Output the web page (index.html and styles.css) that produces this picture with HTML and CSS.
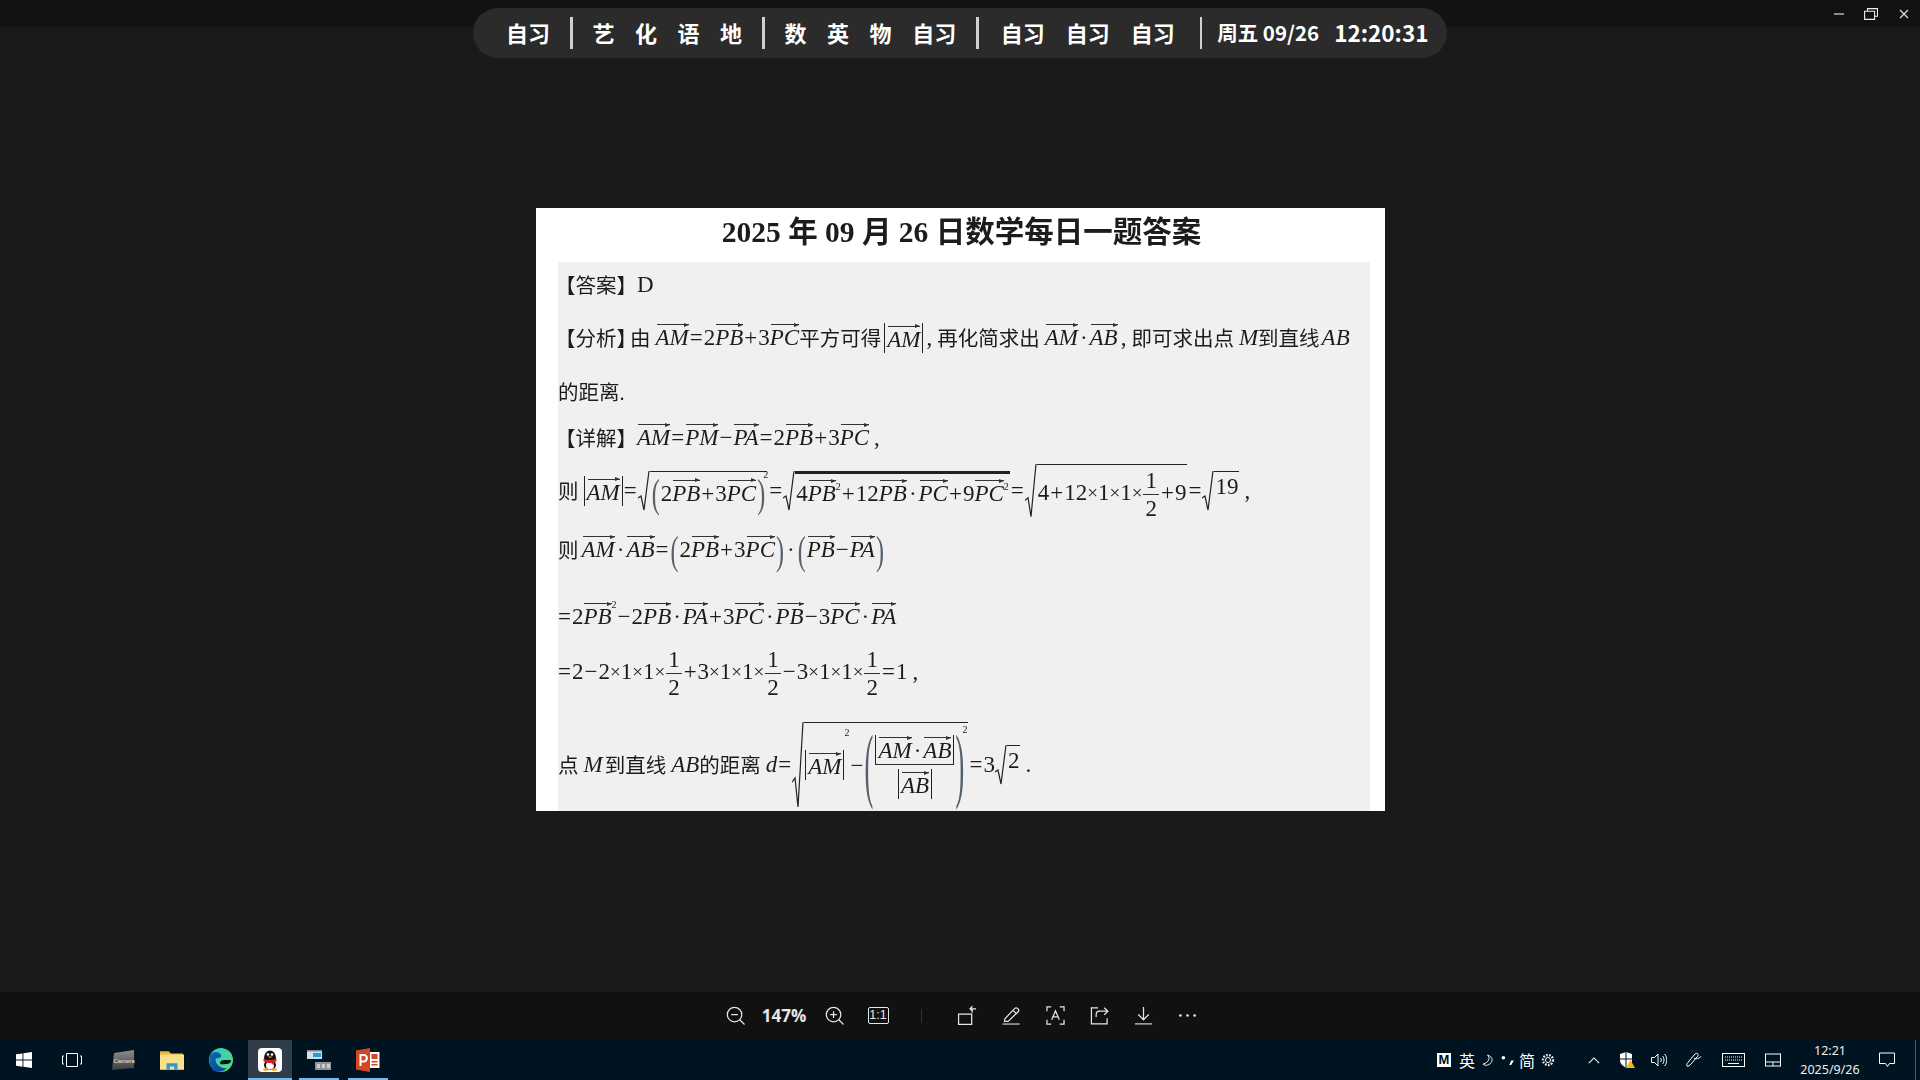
FILE: index.html
```html
<!DOCTYPE html>
<html lang="zh-CN">
<head>
<meta charset="utf-8">
<title>图片查看</title>
<link rel="stylesheet" href="styles.css">
</head>
<body>
<header class="titlebar">
  <svg class="win-min" viewBox="0 0 10 2"><rect width="10" height="2" fill="#8a8a8a"/></svg>
  <svg class="win-max" viewBox="0 0 14 12"><path d="M3.500 3V.6h10v7.600H11M.6 3.200h10v8.200H.6z" fill="none" stroke="#eee" stroke-width="1.100"/></svg>
  <svg class="win-close" viewBox="0 0 10 10"><path d="M1 1l8 8M9 1l-8 8" stroke="#ddd" stroke-width="1.200"/></svg>
</header>

<div class="schedule">
  <span>自习</span><i class="sch-sep"></i>
  <span class="sch-group"><span>艺</span><span>化</span><span>语</span><span>地</span></span><i class="sch-sep"></i>
  <span class="sch-group"><span>数</span><span>英</span><span>物</span><span>自习</span></span><i class="sch-sep"></i>
  <span class="sch-group wide"><span>自习</span><span>自习</span><span>自习</span></span><i class="sch-sep"></i>
  <span class="sch-time"><span class="sch-date">周五 09/26</span><span class="sch-clock">12:20:31</span></span>
</div>

<main class="viewer">
  <article class="paper">
    <h1 class="paper-title">2025 年 09 月 26 日数学每日一题答案</h1>
    <section class="sheet">
      <div class="ln l1"><span class="zh hang">【答案】</span><span>D</span></div>
      <div class="ln l2"><span class="zh hang">【分析】</span><span class="zh you">由</span><i class="v ml4">AM</i><span class="op">=</span><span>2</span><i class="v">PB</i><span class="op">+</span><span>3</span><i class="v">PC</i><span class="zh">平方可得</span><span class="abs ml3"><i class="v">AM</i></span><span class="ml3">,</span><span class="zh ml4">再化简求出</span><i class="v ml4">AM</i><span class="dot">·</span><i class="v">AB</i><span class="ml3">,</span><span class="zh ml4">即可求出点</span><i class="ml4">M</i><span class="zh">到直线</span><i class="ml2">AB</i></div>
      <div class="ln l3"><span class="zh">的距离.</span></div>
      <div class="ln l4"><span class="zh hang">【详解】</span><i class="v">AM</i><span class="op">=</span><i class="v">PM</i><span class="op">−</span><i class="v">PA</i><span class="op">=</span><span>2</span><i class="v">PB</i><span class="op">+</span><span>3</span><i class="v">PC</i><span class="ml4">,</span></div>
      <div class="ln l5"><span class="zh">则</span><span class="abs ml4"><i class="v">AM</i></span><span class="op">=</span>
        <span class="rt r-a"><svg class="rad" viewBox="0 0 12 40" preserveAspectRatio="none"><path d="M0 27L3 25L6 39L11 0"/></svg><span class="rb"><span class="par">(</span><span>2</span><i class="v">PB</i><span class="op">+</span><span>3</span><i class="v">PC</i><span class="par">)</span></span></span><sup class="s2 out">2</sup>
        <span class="op ml4">=</span>
        <span class="rt r-b"><svg class="rad" viewBox="0 0 12 40" preserveAspectRatio="none"><path d="M0 27L3 25L6 39L11 0"/></svg><span class="rb heavy"><span>4</span><i class="v">PB</i><sup class="s2">2</sup><span class="op ml3">+</span><span>12</span><i class="v">PB</i><span class="dot">·</span><i class="v">PC</i><span class="op">+</span><span>9</span><i class="v">PC</i><sup class="s2">2</sup></span></span>
        <span class="op ml4">=</span>
        <span class="rt r-c"><svg class="rad" viewBox="0 0 12 40" preserveAspectRatio="none"><path d="M0 27L3 25L6 39L11 0"/></svg><span class="rb"><span>4</span><span class="op">+</span><span>12</span><span class="x">×</span><span>1</span><span class="x">×</span><span>1</span><span class="x">×</span><span class="frac"><span>1</span><span>2</span></span><span class="op">+</span><span>9</span></span></span>
        <span class="op">=</span>
        <span class="rt r-d"><svg class="rad" viewBox="0 0 12 40" preserveAspectRatio="none"><path d="M0 27L3 25L6 39L11 0"/></svg><span class="rb"><span>19</span></span></span><span class="ml4">,</span></div>
      <div class="ln l6"><span class="zh">则</span><i class="v ml3">AM</i><span class="dot">·</span><i class="v">AB</i><span class="op">=</span><span class="par">(</span><span>2</span><i class="v">PB</i><span class="op">+</span><span>3</span><i class="v">PC</i><span class="par">)</span><span class="dot">·</span><span class="par">(</span><i class="v">PB</i><span class="op">−</span><i class="v">PA</i><span class="par">)</span></div>
      <div class="ln l7"><span class="op first">=</span><span>2</span><i class="v">PB</i><sup class="s2">2</sup><span class="op ml3">−</span><span>2</span><i class="v">PB</i><span class="dot">·</span><i class="v">PA</i><span class="op">+</span><span>3</span><i class="v">PC</i><span class="dot">·</span><i class="v">PB</i><span class="op">−</span><span>3</span><i class="v">PC</i><span class="dot">·</span><i class="v">PA</i></div>
      <div class="ln l8"><span class="op first">=</span><span>2</span><span class="op">−</span><span>2</span><span class="x">×</span><span>1</span><span class="x">×</span><span>1</span><span class="x">×</span><span class="frac"><span>1</span><span>2</span></span><span class="op">+</span><span>3</span><span class="x">×</span><span>1</span><span class="x">×</span><span>1</span><span class="x">×</span><span class="frac"><span>1</span><span>2</span></span><span class="op">−</span><span>3</span><span class="x">×</span><span>1</span><span class="x">×</span><span>1</span><span class="x">×</span><span class="frac"><span>1</span><span>2</span></span><span class="op">=</span><span>1</span><span class="ml4">,</span></div>
      <div class="ln l9"><span class="zh">点</span><i class="ml4">M</i><span class="zh ml2">到直线</span><i class="ml4">AB</i><span class="zh">的距离</span><i class="ml4">d</i><span class="op">=</span>
        <span class="rt r-e"><svg class="rad" viewBox="0 0 12 40" preserveAspectRatio="none"><path d="M0 28L3 26L6 39.500L11 0"/></svg><span class="rb"><span class="abs"><i class="v">AM</i></span><sup class="s2">2</sup><span class="op">−</span><span class="par huge">(</span><span class="frac big"><span class="abs"><i class="v">AM</i><span class="dot">·</span><i class="v">AB</i></span><span class="abs"><i class="v">AB</i></span></span><span class="par huge">)</span><sup class="s2 hi">2</sup></span></span>
        <span class="op ml4">=</span><span>3</span><span class="rt r-d"><svg class="rad" viewBox="0 0 12 40" preserveAspectRatio="none"><path d="M0 27L3 25L6 39L11 0"/></svg><span class="rb"><span>2</span></span></span><span class="ml4">.</span></div>
    </section>
  </article>
</main>

<nav class="toolbar">
  <span class="tool"><svg viewBox="0 0 20 20"><circle cx="9" cy="9" r="7.600"/><path d="M5.500 9h7M14.500 14.500l5 5"/></svg></span>
  <span class="tool-pct">147%</span>
  <span class="tool tool-in"><svg viewBox="0 0 20 20"><circle cx="9" cy="9" r="7.600"/><path d="M5.500 9h7M9 5.500v7M14.500 14.500l5 5"/></svg></span>
  <span class="tool tool-one"><span class="one-box">1:1</span></span>
  <i class="tool-div"></i>
  <span class="tool wide"><svg viewBox="0 0 20 20"><path d="M.6 8.500h13.800v10.800H.6zM15 7V5.500c0-1.500-.8-2.500-2.300-2.500H19M15 3h-2.300M15.300.3L12.700 3l2.600 2.500"/></svg></span>
  <span class="tool wide"><svg viewBox="0 0 20 20"><path d="M3 13.500L13.500 2.500c.8-.8 2-.8 2.800 0l.7.7c.8.8.8 2 0 2.800L6.500 16.200H2.600zM11.500 4.500l4 4"/><path class="bar" d="M.5 19h18"/></svg></span>
  <span class="tool wide"><svg viewBox="0 0 20 20"><path d="M5.500 1H1v4.500M14.500 1H19v4.500M5.500 19H1v-4.500M14.500 19H19v-4.500M6 14.500L10 5l4 9.500M7.300 11.500h5.400"/></svg></span>
  <span class="tool wide"><svg viewBox="0 0 20 20"><path d="M8.500 2H1.500v16.800H18v-6M6.500 11.500V9c0-2 1.500-3.500 3.500-3.500h8.500M15 1.800l3.800 3.700L15 9.200"/></svg></span>
  <span class="tool wide"><svg viewBox="0 0 20 20"><path d="M10 1v13.500M4.500 9l5.500 5.500L15.500 9"/><path class="bar" d="M1 18.800h18"/></svg></span>
  <span class="tool wide"><svg viewBox="0 0 20 20"><circle class="fill" cx="2.500" cy="10" r="1.400"/><circle class="fill" cx="10" cy="10" r="1.400"/><circle class="fill" cx="17.500" cy="10" r="1.400"/></svg></span>
</nav>

<footer class="taskbar">
  <div class="task-left">
    <span class="cell"><svg class="ic16" viewBox="0 0 16 16"><path fill="#fff" d="M0 2.300l6.500-.9v6.200H0zM7.400 1.300L16 0v7.600H7.400zM0 8.500h6.500v6.200L0 13.800zM7.400 8.500H16V16l-8.600-1.300z"/></svg></span>
    <span class="cell"><svg class="ic20" viewBox="0 0 20 14"><path fill="none" stroke="#fff" stroke-width="1" d="M4.500.5h11v13h-11zM2 3H.5v8H2M18 3h1.500v8H18"/></svg></span>
    <span class="cell narrow"><svg class="ic24" viewBox="0 0 24 20"><defs><linearGradient id="cam" x1="0" y1="0" x2="0" y2="1"><stop offset="0" stop-color="#8e8e8e"/><stop offset="1" stop-color="#3e3e3e"/></linearGradient></defs><path fill="url(#cam)" d="M3 3L23 0v18L1 20z"/><text class="cam-text" x="2.500" y="13">Camera</text></svg></span>
    <span class="cell narrow"><svg class="ic24" viewBox="0 0 22 18"><path fill="#e8b93f" d="M0 1h8l2 2h11v2H0z"/><path fill="#fbe08a" d="M0 4h22v14H0z"/><path fill="#2b9bd8" d="M6 18v-6h10v6h-3v-3H9v3z"/></svg></span>
    <span class="cell narrow"><svg class="ic24" viewBox="0 0 24 24"><defs><linearGradient id="edgeA" x1="0" y1="0" x2="1" y2="1"><stop offset="0" stop-color="#2ec4d6"/><stop offset="1" stop-color="#5ce06a"/></linearGradient><linearGradient id="edgeB" x1="0" y1="0" x2="1" y2="1"><stop offset="0" stop-color="#0b6ab8"/><stop offset="1" stop-color="#0a3f8a"/></linearGradient></defs><circle cx="12" cy="12" r="12" fill="url(#edgeA)"/><path fill="url(#edgeB)" d="M1 7c3-4 9-4 11 0 1 2-1 3-3 3-3 0-3 3-1 6 2 3 6 5 10 4-3 3-8 5-13 3C2 21-1 13 1 7z"/><path fill="#001320" d="M11 15c0-2 2-3 5-3h6c0 3-2 4-5 4-3 0-6 1-6-1z"/></svg></span>
    <span class="cell narrow active"><svg class="ic24" viewBox="0 0 24 24"><rect width="24" height="24" rx="4" fill="#fff"/><ellipse cx="12" cy="10" rx="6" ry="7.500" fill="#111"/><ellipse cx="12" cy="17" rx="6" ry="5" fill="#111"/><ellipse cx="12" cy="17.500" rx="4" ry="4" fill="#fff"/><ellipse cx="8" cy="21.500" rx="3" ry="1.200" fill="#e8a020"/><ellipse cx="16" cy="21.500" rx="3" ry="1.200" fill="#e8a020"/><path fill="#e02020" d="M5.500 10.500c4 2 9 2 13 0V13c-1 .7-2 1.200-3 1.400l.5 3.100-3-2.500c-3 .3-6-.6-7.500-2z"/><circle cx="10" cy="6.500" r="1.300" fill="#fff"/><circle cx="14" cy="6.500" r="1.300" fill="#fff"/><path fill="#f0b020" d="M9.500 8.500h5L12 10z"/></svg></span>
    <span class="cell narrow run"><svg class="ic24" viewBox="0 0 24 20"><rect x="0" y="1" width="15" height="8" fill="#d5dfe6"/><rect x="6" y="3" width="8" height="4" fill="#1c9ee8"/><rect x="0" y="0" width="15" height="1.500" fill="#7a8a94"/><rect x="8" y="12" width="16" height="8" fill="#8e9498"/><rect x="10" y="14" width="3" height="4" fill="#c8ced2"/><rect x="15" y="14" width="3" height="4" fill="#c8ced2"/><rect x="20" y="14" width="3" height="4" fill="#c8ced2"/></svg></span>
    <span class="cell narrow run"><svg class="ic24" viewBox="0 0 24 24"><path fill="#d24726" d="M0 2.500L14 0v24L0 21.500z"/><path fill="#fff" d="M14 4h9.500v16H14z"/><path fill="#d24726" d="M15.500 6h6v5h-6zM15.500 13h6v1.500h-6zM15.500 16h6v1.500h-6z"/><path fill="none" stroke="#fff" stroke-width="2" d="M4.500 18V7h3.200a3 3 0 010 6.400H4.500"/></svg></span>
  </div>
  <div class="tray">
    <span class="ime"><b class="ime-m">M</b><span class="ime-t ime-en">英</span><svg class="ime-moon" viewBox="0 0 12 14"><path d="M6 1c3 3 2 8-5 10 4 3 10 0 10-5 0-2-2-4-5-5z" fill="none" stroke="#fff" stroke-width="1"/></svg><svg class="ime-dots" viewBox="0 0 14 12"><circle cx="2.500" cy="3" r="2" fill="#fff"/><path d="M9 11l2-5h3l-3 5z" fill="#fff"/></svg><span class="ime-t ime-zh">简</span><svg class="ime-gear" viewBox="0 0 14 14"><circle cx="7" cy="7" r="2.500" fill="none" stroke="#fff"/><circle cx="7" cy="7" r="5" fill="none" stroke="#fff" stroke-width="2.400" stroke-dasharray="1.700 1.300" opacity=".9"/></svg></span>
    <span class="tray-cell c-chev"><svg viewBox="0 0 14 8" class="t-chev"><path d="M1 7l6-6 6 6" fill="none" stroke="#fff" stroke-width="1.200"/></svg></span>
    <span class="tray-cell c-shield"><svg viewBox="0 0 16 16" class="t16"><path d="M1 2l6-2 6 2v6c0 4-3 6-6 7.500C4 14 1 12 1 8z" fill="#fff"/><path d="M7 0v15M1 7h12" stroke="#001320"/><path d="M11.500 8l4.500 8H7z" fill="#f5b50f"/></svg></span>
    <span class="tray-cell c-vol"><svg viewBox="0 0 16 14" class="t16"><path d="M.5 4.500h3l3.500-3.500v12L3.500 9.500h-3zM9.500 5c1 1 1 3 0 4M11.500 3c2 2 2 6 0 8M13.500 1c3 3 3 9 0 12" fill="none" stroke="#fff"/></svg></span>
    <span class="tray-cell c-pen"><svg viewBox="0 0 16 16" class="t16"><path d="M1 14c-1-2 1-3 2-5l6-7c1-1 2.500-1 3 0s0 2-1 3l-6 7c-1 1-3 3-4 2zM8 6c1 1 3 1 5 0s2-2 2-1" fill="none" stroke="#fff"/></svg></span>
    <span class="tray-cell c-kbd"><svg viewBox="0 0 23 14" class="t-kbd"><rect x=".5" y=".5" width="22" height="13" fill="none" stroke="#fff"/><path d="M3 4h17M3 7h17" stroke="#fff" stroke-dasharray="1 1"/><path d="M6 10.500h11" stroke="#fff"/></svg></span>
    <span class="tray-cell c-pad"><svg viewBox="0 0 16 13" class="t16"><rect x=".5" y=".5" width="15" height="12" fill="none" stroke="#fff"/><path d="M.5 8.500h15M8 8.500v4" stroke="#fff"/></svg></span>
    <span class="clock"><span>12:21</span><span>2025/9/26</span></span>
    <span class="tray-cell c-note"><svg viewBox="0 0 16 15" class="t16"><path d="M.5.5h15v10.500h-5l-2 3-2-3h-6z" fill="none" stroke="#fff"/></svg></span>
    <i class="desk"></i>
  </div>
</footer>
</body>
</html>
```

FILE: styles.css
```css
* { box-sizing: border-box; }
html, body { margin: 0; height: 100%; }
body {
  width: 1920px; height: 1080px; overflow: hidden;
  display: flex; flex-direction: column;
  background: #1a1a1a; color: #fff;
  font-family: "Noto Sans CJK SC", "Noto Sans", sans-serif;
  position: relative;
}

/* title bar */
.titlebar { height: 27px; flex: none; background: #121212; display: flex; align-items: flex-start; justify-content: flex-end; }
.titlebar svg { display: block; flex: none; }
.win-min { width: 10px; height: 2px; margin-top: 13px; }
.win-max { width: 14px; height: 12px; margin: 8px 0 0 20px; }
.win-close { width: 10px; height: 10px; margin: 9px 11px 0 21px; }

/* schedule pill */
.schedule {
  position: absolute; left: 473px; top: 8px; width: 974px; height: 50px;
  background: #2b2b2b; border-radius: 25px;
  display: flex; align-items: center; gap: 20px; padding: 0 0 2px 33px;
  font-size: 22px; font-weight: 700; line-height: 1; color: #fff;
}
.sch-sep { width: 2.500px; height: 32px; background: #d0d0d0; flex: none; margin-top: 2px; }
.sch-group { display: flex; gap: 20.500px; }
.sch-group.wide { gap: 21px; margin: 0 5px 0 2px; }
.sch-time { display: flex; align-items: center; gap: 15px; margin-left: -5px; }
.sch-date { font-size: 20.500px; }
.sch-clock { font-size: 22.500px; }

/* picture */
.viewer { flex: 1; display: flex; align-items: center; justify-content: center; }
.paper { width: 849px; height: 603px; background: #fff; color: #1c1c1c; display: flex; flex-direction: column; font-family: "Liberation Serif", "Noto Sans CJK SC", serif; filter: blur(.35px); margin-left: 1px; }
.paper-title { margin: 0; height: 54px; flex: none; font-size: 29.500px; line-height: 48px; font-weight: 700; text-align: center; padding-left: 2px; }
.sheet { margin-left: 22px; width: 812px; flex: 1; background: #f0f0f0; font-size: 23px; }

.ln { display: flex; align-items: center; white-space: pre; line-height: 1; }
.ln > *, .rb > * { flex: none; }
.zh { font-size: 20.500px; position: relative; top: 2px; }
.you { margin-left: -7px; }
.l1 { height: 46px; }
.l2 { height: 60px; }
.l3 { height: 48px; }
.l4 { height: 44px; }
.l5 { height: 62px; }
.l6 { height: 56px; }
.l7 { height: 58px; margin-top: 10px; }
.l8 { height: 52px; }
.l9 { height: 92px; margin-top: 21px; }

.hang { margin-left: -3px; }
.ml2 { margin-left: 2px; }
.ml3 { margin-left: 3px; }
.ml4 { margin-left: 5px; }
.op { margin: 0 1px; font-family: "Liberation Serif", serif; }
.op.first { margin-left: 0; }
.x { font-size: 19px; margin: 0; }
.dot { margin: 0 2px; }
i { font-family: "Liberation Serif", serif; font-style: italic; }

.v { position: relative; display: inline-block; }
.v::before { content: ""; position: absolute; left: 1px; right: 0; top: -2px; height: 1.200px; background: #333; }
.v::after { content: ""; position: absolute; right: 0; top: -3.300px; border-left: 5px solid #333; border-top: 2px solid transparent; border-bottom: 2px solid transparent; }

.abs { display: inline-flex; align-items: center; border-left: 1.400px solid #222; border-right: 1.400px solid #222; padding: 5px 2px 2px; }
.s2 { font-size: 10px; align-self: flex-start; line-height: 1; margin-top: 12px; }
.s2.out { margin-top: 10px; margin-left: -4px; }
.rb .s2 { margin-top: 5px; }
.rb .s2.hi { margin-top: 2px; margin-left: -3px; }
.par { display: inline-block; font-size: 24px; font-weight: 400; color: #55606a; transform: scale(1, 1.700); margin: 0 1px; }
.par.huge { transform: scale(1.100, 3.400); }

.frac { display: inline-flex; flex-direction: column; align-items: center; margin: 0 1px; position: relative; top: 2px; }
.frac > span:first-child { border-bottom: 1.300px solid #333; padding: 0 2px 2px; }
.frac > span:last-child { padding-top: 2px; }
.frac.big > span:first-child { padding: 4px 2px 2px; margin-bottom: 4px; }
.frac.big > .abs:last-child { padding: 5px 2px 2px; }

.rt { display: inline-flex; align-items: stretch; }
.rad { width: 12px; flex: none; display: block; }
.rad path { fill: none; stroke: #222; stroke-width: 1.200; vector-effect: non-scaling-stroke; }
.rb { display: inline-flex; align-items: center; border-top: 1.400px solid #222; padding: 0 1px; }
.rb.heavy { border-top-width: 3px; padding-top: 3px; }
.r-a .rb { height: 40px; padding-top: 4px; }
.r-c .rb { padding-top: 2px; }
.r-d .rb { height: 27px; padding-top: 3px; }
.r-e .rb { height: 86px; }

/* viewer toolbar */
.toolbar { height: 49px; flex: none; background: #111; display: flex; align-items: center; padding: 0 0 1px 717px; border-top: 1px solid #1c1c1c; }
.tool { width: 36px; height: 20px; display: flex; align-items: center; justify-content: center; flex: none; }
.tool svg { width: 19px; height: 19px; fill: none; stroke: #e6e6e6; stroke-width: 1.300; overflow: visible; }
.tool svg .fill { fill: #e6e6e6; stroke: none; }
.tool svg .bar { stroke: #9a9a9a; stroke-width: 1.800; }
.tool-pct { width: 62px; text-align: center; font-size: 17px; font-weight: 700; color: #e6e6e6; font-family: "Open Sans", sans-serif; flex: none; }
.tool-in { width: 38px; }
.tool-one { margin-left: 7px; }
.one-box { width: 21px; height: 17px; border: 1.300px solid #e6e6e6; border-radius: 2px; font-size: 12.500px; line-height: 14px; text-align: center; font-family: "Liberation Sans", sans-serif; color: #e6e6e6; }
.tool-div { width: 1px; height: 14px; background: #333; margin: 0 23px 0 25px; flex: none; }
.tool.wide { width: 44px; }

/* taskbar */
.taskbar { height: 40px; flex: none; background: #001320; display: flex; justify-content: space-between; position: relative; }
.task-left { display: flex; }
.cell { width: 48px; height: 40px; display: flex; align-items: center; justify-content: center; flex: none; position: relative; }
.cell.narrow { width: 49px; }
.cell:nth-child(3) { margin-left: 2.500px; }
.cell svg { display: block; }
.ic16 { width: 16px; height: 16px; }
.ic20 { width: 20px; height: 14px; }
.ic24 { width: 24px; height: 24px; }
.active::before { content: ""; position: absolute; left: 0; top: 0; width: 44px; height: 40px; margin-left: 2px; background: #2f3e48; }
.active svg { position: relative; }
.active::after, .run::after { content: ""; position: absolute; left: 2px; bottom: 0; width: 44px; height: 2px; background: #76b9ed; }
.run::after { left: 4px; width: 40px; }
.cam-text { font: 6px "Liberation Sans", sans-serif; fill: #e4e4e4; }

.tray { display: flex; align-items: center; height: 40px; }
.ime { display: flex; align-items: center; margin-right: 23px; height: 40px; }
.ime-m { width: 14px; height: 14px; background: #fff; color: #001320; font: 700 13px/14px "Liberation Sans", sans-serif; text-align: center; }
.ime-t { font-size: 16px; line-height: 1; color: #fff; }
.ime-en { margin-left: 8px; }
.ime-zh { margin-left: 5px; }
.ime-moon { width: 11px; height: 13px; margin-left: 7px; }
.ime-dots { width: 13px; height: 11px; margin-left: 8px; }
.ime-gear { width: 14px; height: 14px; margin-left: 6px; }
.tray-cell { display: flex; justify-content: center; align-items: center; height: 40px; flex: none; }
.t-chev { width: 12px; height: 7px; }
.t16 { width: 16px; height: 16px; }
.t-kbd { width: 23px; height: 14px; }
.c-chev { width: 32px; }
.c-shield { width: 33px; }
.c-vol { width: 32px; }
.c-pen { width: 38px; }
.c-kbd { width: 40px; }
.c-pad { width: 40px; }
.clock { width: 74px; display: flex; flex-direction: column; align-items: center; gap: 4px; font-size: 12.500px; line-height: 15px; color: #eee; font-family: "Noto Sans", sans-serif; }
.c-note { width: 40px; }
.desk { width: 1px; height: 40px; background: #4a5a66; margin: 0 4px 0 8px; flex: none; }
```
